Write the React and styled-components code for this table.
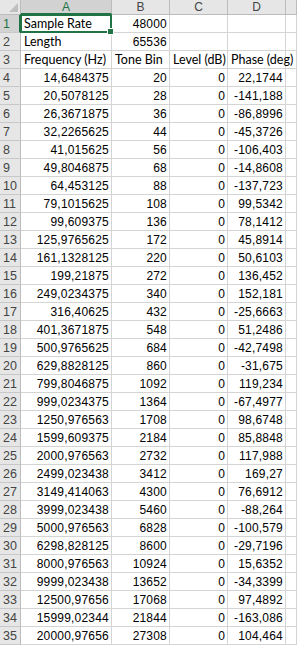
import React from "react";
import styled, { createGlobalStyle, css } from "styled-components";

const Global = createGlobalStyle`
  html, body { margin: 0; padding: 0; background: #fff; }
  body { font-family: "Liberation Sans", Arial, sans-serif; }
`;

const rows = [
  ["14,6484375", "20", "0", "22,1744"],
  ["20,5078125", "28", "0", "-141,188"],
  ["26,3671875", "36", "0", "-86,8996"],
  ["32,2265625", "44", "0", "-45,3726"],
  ["41,015625", "56", "0", "-106,403"],
  ["49,8046875", "68", "0", "-14,8608"],
  ["64,453125", "88", "0", "-137,723"],
  ["79,1015625", "108", "0", "99,5342"],
  ["99,609375", "136", "0", "78,1412"],
  ["125,9765625", "172", "0", "45,8914"],
  ["161,1328125", "220", "0", "50,6103"],
  ["199,21875", "272", "0", "136,452"],
  ["249,0234375", "340", "0", "152,181"],
  ["316,40625", "432", "0", "-25,6663"],
  ["401,3671875", "548", "0", "51,2486"],
  ["500,9765625", "684", "0", "-42,7498"],
  ["629,8828125", "860", "0", "-31,675"],
  ["799,8046875", "1092", "0", "119,234"],
  ["999,0234375", "1364", "0", "-67,4977"],
  ["1250,976563", "1708", "0", "98,6748"],
  ["1599,609375", "2184", "0", "85,8848"],
  ["2000,976563", "2732", "0", "117,988"],
  ["2499,023438", "3412", "0", "169,27"],
  ["3149,414063", "4300", "0", "76,6912"],
  ["3999,023438", "5460", "0", "-88,264"],
  ["5000,976563", "6828", "0", "-100,579"],
  ["6298,828125", "8600", "0", "-29,7196"],
  ["8000,976563", "10924", "0", "15,6352"],
  ["9999,023438", "13652", "0", "-34,3399"],
  ["12500,97656", "17068", "0", "97,4892"],
  ["15999,02344", "21844", "0", "-163,086"],
  ["20000,97656", "27308", "0", "104,464"],
];

const GREEN = "#217346";
const GRID = "#d4d4d4";

const Sheet = styled.div`
  display: grid;
  grid-template-columns: 21px 91px 58px 58px 58px 11px;
  grid-auto-rows: 18px;
  grid-template-rows: 15px;
  width: 297px;
  font-size: 12px;
  color: #000;
`;

const Corner = styled.div`
  position: relative;
  background: #e6e6e6;
  border-right: 1px solid #bcbcbc;
  border-bottom: 1px solid #bcbcbc;
  box-sizing: border-box;
  &::after {
    content: "";
    position: absolute;
    right: 2px;
    bottom: 2px;
    width: 0;
    height: 0;
    border-left: 9px solid transparent;
    border-bottom: 9px solid #bfbfbf;
  }
`;

const ColHead = styled.div`
  box-sizing: border-box;
  background: ${(p) => (p.$active ? "#d2d2d2" : "#e6e6e6")};
  color: ${(p) => (p.$active ? GREEN : "#444")};
  border-right: 1px solid #bcbcbc;
  border-bottom: ${(p) => (p.$active ? `2px solid ${GREEN}` : "1px solid #bcbcbc")};
  display: flex;
  align-items: center;
  justify-content: center;
  font-size: 12px;
  line-height: 1;
`;

const RowHead = styled.div`
  box-sizing: border-box;
  background: ${(p) => (p.$active ? "#d2d2d2" : "#e6e6e6")};
  color: ${(p) => (p.$active ? GREEN : "#444")};
  border-right: ${(p) => (p.$active ? `2px solid ${GREEN}` : "1px solid #bcbcbc")};
  border-bottom: 1px solid #c8c8c8;
  display: flex;
  align-items: center;
  padding-left: 3px;
  font-size: 12.5px;
`;

const Cell = styled.div`
  position: relative;
  box-sizing: border-box;
  border-right: 1px solid ${GRID};
  border-bottom: 1px solid ${GRID};
  display: flex;
  align-items: center;
  justify-content: ${(p) => (p.$num ? "flex-end" : "flex-start")};
  padding: 0 2px 0 3px;
  white-space: nowrap;
  overflow: visible;
  font-family: ${(p) => (p.$num ? `"Liberation Sans", Arial, sans-serif` : `Lato, "Liberation Sans", sans-serif`)};
  font-size: ${(p) => (p.$num ? "12px" : "12.5px")};
  letter-spacing: ${(p) => (p.$num ? "0.2px" : "0")};
  ${(p) =>
    p.$selected &&
    css`
      &::before {
        content: "";
        position: absolute;
        left: -1px;
        top: -1px;
        right: -1px;
        bottom: -1px;
        border: 2px solid ${GREEN};
        z-index: 2;
      }
      &::after {
        content: "";
        position: absolute;
        right: -3px;
        bottom: -3px;
        width: 5px;
        height: 5px;
        background: ${GREEN};
        border: 1px solid #fff;
        z-index: 3;
      }
    `}
`;

export default function App() {
  return (
    <>
      <Global />
      <Sheet>
        <Corner />
        <ColHead $active>A</ColHead>
        <ColHead>B</ColHead>
        <ColHead>C</ColHead>
        <ColHead>D</ColHead>
        <ColHead />

        <RowHead $active>1</RowHead>
        <Cell $selected>Sample Rate</Cell>
        <Cell $num>48000</Cell>
        <Cell />
        <Cell />
        <Cell />

        <RowHead>2</RowHead>
        <Cell>Length</Cell>
        <Cell $num>65536</Cell>
        <Cell />
        <Cell />
        <Cell />

        <RowHead>3</RowHead>
        <Cell>Frequency (Hz)</Cell>
        <Cell>Tone Bin</Cell>
        <Cell>Level (dB)</Cell>
        <Cell>Phase (deg)</Cell>
        <Cell />

        {rows.map((r, i) => (
          <React.Fragment key={i}>
            <RowHead>{i + 4}</RowHead>
            {r.map((v, j) => (
              <Cell key={j} $num>
                {v}
              </Cell>
            ))}
            <Cell />
          </React.Fragment>
        ))}
      </Sheet>
    </>
  );
}
